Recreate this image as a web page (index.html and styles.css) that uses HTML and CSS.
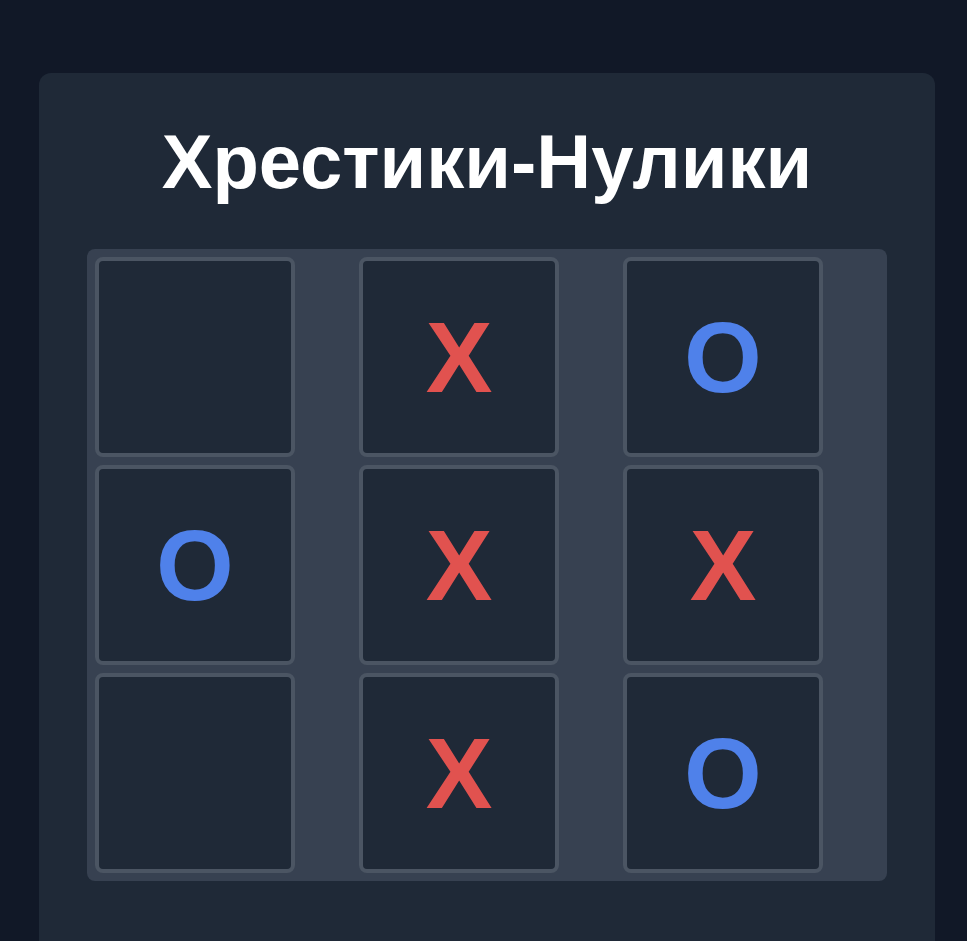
FILE: index.html
```html
<!DOCTYPE html>
<html lang="uk">
<head>
    <meta charset="UTF-8">
    <meta name="viewport" content="width=device-width, initial-scale=1.0">
    <link rel="stylesheet" href="styles.css">
</head>
<body>
    <div class="container">
        <h1>Хрестики-Нулики</h1>
        <div class="board">
            <div class="cell"></div>
            <div class="cell x">X</div>
            <div class="cell o">O</div>
            <div class="cell o">O</div>
            <div class="cell x">X</div>
            <div class="cell x">X</div>
            <div class="cell"></div>
            <div class="cell x">X</div>
            <div class="cell o">O</div>
        </div>
    </div>
</body>
</html>
```

FILE: styles.css
```css
body {
    font-family: "Liberation Sans", Arial, sans-serif;
    margin: 0;
    padding: 73px 0 0 39px;
    background-color: #111827;
    height: 100vh;
    box-sizing: border-box;
    overflow: hidden;
}

.container {
    width: 896px;
    min-height: 1000px;
    box-sizing: border-box;
    padding: 48px;
    border-radius: 12px;
    background-color: #1f2937;
}

h1 {
    color: #fff;
    font-size: 76px;
    line-height: 75px;
    font-weight: bold;
    text-align: center;
    margin: 3px 0 50px;
}

.board {
    display: grid;
    grid-template-columns: repeat(3, 1fr);
    gap: 8px;
    padding: 8px;
    border-radius: 8px;
    background-color: #374151;
}

.cell {
    width: 200px;
    height: 200px;
    box-sizing: border-box;
    border: 4px solid #4b5563;
    border-radius: 8px;
    background-color: #1f2937;
    display: flex;
    justify-content: center;
    align-items: center;
    font-size: 100px;
    font-weight: bold;
}

.x {
    color: #e1524f;
}

.o {
    color: #4f81ea;
}
```
